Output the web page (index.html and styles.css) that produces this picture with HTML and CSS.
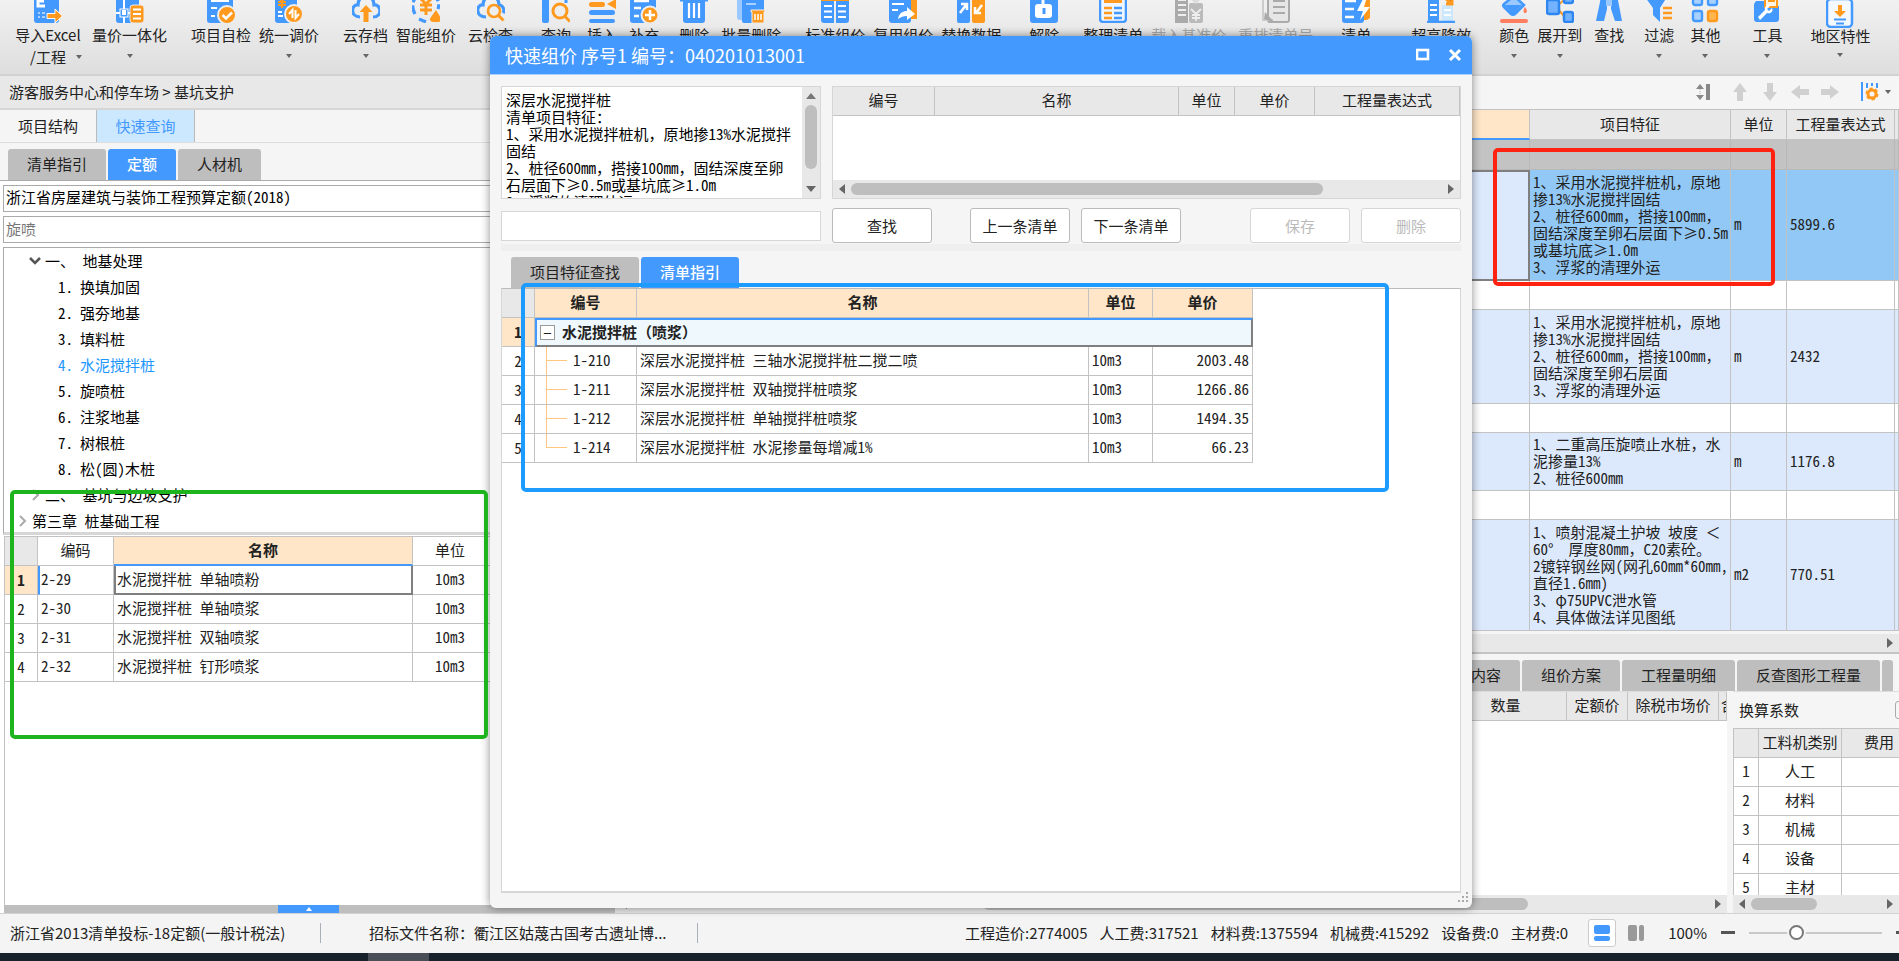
FILE: index.html
```html
<!DOCTYPE html>
<html lang="zh-CN">
<head>
<meta charset="utf-8">
<title>快速组价</title>
<link rel="stylesheet" href="styles.css">
</head>
<body>
<header class="ribbon">
  <button class="tool two-line"><svg viewBox="0 0 28 28"><rect width="25" height="28" rx="3" fill="#4499ff"/><path d="M10 1H4v10h7M4 6h6" fill="none" stroke="#fff" stroke-width="3"/><path d="M4 18h2M8 18h3M4 22h2M8 22h3" stroke="#a9d1ff" stroke-width="2"/><path d="M13 18.500h8v-4.500l7.500 7-7.500 7v-4.500h-8z" fill="#ff9a1f" stroke="#fff" stroke-width="1"/></svg><span>导入Excel<br>/工程</span><i class="caret"></i></button>
  <button class="tool s12"><svg viewBox="0 0 28 28"><rect width="23" height="28" rx="3" fill="#4499ff"/><path d="M8 0v28M0 18h23" stroke="#fff" stroke-width="2"/><rect x="4" y="14" width="8" height="8" fill="#4499ff" stroke="#fff" stroke-width="1"/><rect x="6" y="15" width="4" height="5" fill="#fff"/><rect x="14" y="10" width="14" height="18" rx="3" fill="#ff9a1f" stroke="#e9e9e9"/><path d="M17 14.500h8M17 19h8M17 23.500h8" stroke="#fff" stroke-width="2"/></svg><span>量价一体化</span><i class="caret"></i></button>
  <button class="tool s24"><svg viewBox="0 0 28 28"><rect width="26" height="28" rx="3" fill="#4499ff"/><path d="M4 6h18M4 13h6M4 21h4" stroke="#fff" stroke-width="2"/><circle cx="20" cy="20" r="9" fill="#ff9a1f" stroke="#eee" stroke-width="2"/><path d="M15.500 20l3.500 3.500 6-6" fill="none" stroke="#fff" stroke-width="2.500"/></svg><span>项目自检</span></button>
  <button class="tool s8"><svg viewBox="0 0 28 28"><rect width="22" height="28" rx="3" fill="#4499ff"/><path d="M3 2l4 4 4-4M7 6v7M3 7h8M3 10h8" fill="none" stroke="#ff9a1f" stroke-width="2.200"/><path d="M3 21h5M3 17h4" stroke="#fff" stroke-width="2"/><circle cx="19" cy="19" r="9" fill="#ff9a1f" stroke="#eee" stroke-width="2"/><path d="M17.500 23v-8l-3.500 4M20.500 15v8l3.500-4" fill="none" stroke="#fff" stroke-width="2"/></svg><span>统一调价</span><i class="caret"></i></button>
  <button class="tool s24"><svg viewBox="0 0 28 28"><path d="M8 22C-2 22-1 9 6 10 6-2 22-2 22 10c7-1 9 12-1 12" fill="none" stroke="#4499ff" stroke-width="3.200"/><path d="M14 10l6.500 7H16.500v10h-5V17H7.500z" fill="#ff9a1f"/></svg><span>云存档</span><i class="caret"></i></button>
  <button class="tool s8"><svg viewBox="0 0 28 28"><path d="M3 19C-1 12 0 3 8 0M20 0c6 3 8 8 6 14M7 24l7 3" fill="none" stroke="#4499ff" stroke-width="3.200" stroke-dasharray="9 3"/><path d="M8 3l6 6 6-6M14 9v11M8 10h12M8 15h12" fill="none" stroke="#ff9a1f" stroke-width="3"/><path d="M24 15l5 8c1 3-1 4-3 4h-5c-3 0-4-3-2-5z" fill="#ff9a1f"/></svg><span>智能组价</span></button>
  <button class="tool s12"><svg viewBox="0 0 28 28"><path d="M9 22C-2 22-1 9 6 10 6-2 22-2 22 10c4 0 6 5 4 8" fill="none" stroke="#4499ff" stroke-width="3.200"/><circle cx="17" cy="16" r="6" fill="#eee" stroke="#ff9a1f" stroke-width="2.600"/><path d="M21.500 20.500l5 5" stroke="#ff9a1f" stroke-width="3"/></svg><span>云检查</span></button>
  <button class="tool s28"><svg viewBox="0 0 28 28"><rect width="7" height="28" rx="2" fill="#4499ff"/><path d="M8 0h16v8" fill="none" stroke="#4499ff" stroke-width="3"/><circle cx="18" cy="16" r="7" fill="#eee" stroke="#ff9a1f" stroke-width="3"/><path d="M23 21.500l5 5" stroke="#ff9a1f" stroke-width="3"/></svg><span>查询</span></button>
  <button class="tool s16"><svg viewBox="0 0 28 28"><rect x="1" y="24" width="26" height="4" rx="2" fill="#4499ff"/><rect x="1" y="15" width="26" height="5" rx="2.500" fill="#4499ff"/><rect x="1" y="7" width="16" height="5" rx="2.500" fill="#ff9a1f"/><path d="M28 4v10l-9-5z" fill="#ff9a1f"/></svg><span>插入</span></button>
  <button class="tool s12"><svg viewBox="0 0 28 28"><rect width="26" height="28" rx="3" fill="#4499ff"/><path d="M4 6h15M4 13h7M4 21h5" stroke="#fff" stroke-width="2.500"/><circle cx="20" cy="20" r="8.500" fill="#ff9a1f" stroke="#eee" stroke-width="2"/><path d="M20 15v10M15 20h10" stroke="#fff" stroke-width="2.500"/></svg><span>补充</span></button>
  <button class="tool s20"><svg viewBox="0 0 28 28"><path d="M3 6h22v19a3 3 0 0 1-3 3H6a3 3 0 0 1-3-3z" fill="#4499ff"/><path d="M0 5h28M9 2h10" stroke="#4499ff" stroke-width="3"/><path d="M9 8v15M14 8v15M19 8v15" stroke="#fff" stroke-width="2.200"/></svg><span>删除</span></button>
  <button class="tool s12"><svg viewBox="0 0 28 28"><path d="M0 0h5v25H3a3 3 0 0 1-3-3z" fill="#9bc9ff"/><rect x="5" width="22" height="28" rx="2" fill="#4499ff"/><path d="M9 4h10M9 9h10" stroke="#a9d1ff" stroke-width="2"/><path d="M14 15h14v2h-1v11H15V17h-1z" fill="#ff9a1f" stroke="#eee" stroke-width="1"/><path d="M18 19v6M21 19v6M24 19v6" stroke="#fff" stroke-width="1.500"/></svg><span>批量删除</span></button>
  <button class="tool s24"><svg viewBox="0 0 28 28"><path d="M0 6h13v22H3a3 3 0 0 1-3-3zM15 6h13v19a3 3 0 0 1-3 3H15z" fill="#4499ff"/><path d="M0 4h28" stroke="#ff9a1f" stroke-width="4"/><path d="M3 11h8M3 16.500h8M3 22h8M17 11h8M17 16.500h8M17 22h8" stroke="#fff" stroke-width="2"/></svg><span>标准组价</span></button>
  <button class="tool s8"><svg viewBox="0 0 28 28"><path d="M19 2h9v22h-9z" fill="#ff9a1f"/><rect width="22" height="28" rx="3" fill="#4499ff"/><path d="M3 4h12M3 9h12M3 15h6" stroke="#fff" stroke-width="2"/><path d="M9 24c1-6 5-8 9-8v-4l8 7-8 6v-4c-4 0-6 1-9 3z" fill="#fff"/></svg><span>复用组价</span></button>
  <button class="tool s8"><svg viewBox="0 0 28 28"><rect width="13" height="28" rx="2" fill="#4499ff"/><rect x="15" width="13" height="28" rx="2" fill="#ff9a1f"/><path d="M3 18l6-8M4 9h6v6M25 10l-6 8M18 12v6h6" fill="none" stroke="#fff" stroke-width="2.500"/></svg><span>替换数据</span></button>
  <button class="tool s28"><svg viewBox="0 0 28 28"><rect width="28" height="28" rx="3" fill="#4499ff"/><path d="M5 5V3a4 4 0 0 1 8 0v7" fill="none" stroke="#fff" stroke-width="3"/><rect x="5" y="9" width="17" height="14" rx="3" fill="#fff"/><path d="M14 13v6" stroke="#4499ff" stroke-width="3"/></svg><span>解除</span></button>
  <button class="tool s24"><svg viewBox="0 0 28 28"><rect x="1" y="-4" width="26" height="31" rx="3" fill="#eef6ff" stroke="#4499ff" stroke-width="2.500"/><path d="M5 6h18" stroke="#ff9a1f" stroke-width="4"/><path d="M5 13h8M5 18h8M5 23h8" stroke="#ff9a1f" stroke-width="2.500"/><path d="M15 13h8M15 18h8M15 23h8" stroke="#4499ff" stroke-width="2.500"/></svg><span>整理清单</span></button>
  <button class="tool s8" disabled><svg viewBox="0 0 28 28"><rect width="13" height="28" fill="#aaa"/><rect x="14" y="8" width="14" height="20" rx="2" fill="#bbb"/><path d="M3 5h8M3 10h8M3 15h8M3 20h8M16 14l5 5 5-5M21 19v7M17 20h8M17 23h8" fill="none" stroke="#eee" stroke-width="1.800"/><path d="M12 0h13v5l-4 4-5-4z" fill="#ddd"/></svg><span>载入基准价</span></button>
  <button class="tool s12" disabled><svg viewBox="0 0 28 28"><rect x="6" y="-3" width="21" height="30" rx="2" fill="#e6e6e6" stroke="#aaa" stroke-width="2"/><path d="M11 6h12M11 12h12M11 18h12" stroke="#aaa" stroke-width="2"/><path d="M1 0v25h10" fill="none" stroke="#ccc" stroke-width="2"/><path d="M3 17l9 10-10-3z" fill="#aaa"/></svg><span>重排清单号</span></button>
  <button class="tool s28"><svg viewBox="0 0 28 28"><path d="M20 0h8v23l-3 2h-5z" fill="#ff9a1f"/><rect width="22" height="28" rx="3" fill="#4499ff"/><path d="M3 6h11M3 14h9M3 22h9" stroke="#fff" stroke-width="2.500"/><path d="M22 2l-7 14h6l-3 9 10-13h-6l3-10z" fill="#fff"/></svg><span>清单</span></button>
  <button class="tool s40"><svg viewBox="0 0 28 28"><path d="M1 3h11v25H1z" fill="#4499ff"/><path d="M15 10h11v17H15z" fill="#cce8ff"/><path d="M0 27h28" stroke="#4499ff" stroke-width="2.500"/><path d="M3 10h7M3 15h7M3 20h7M17 15h7M17 20h7" stroke="#fff" stroke-width="2"/><path d="M18 3l7 6M25 3v6h-6" stroke="#ff9a1f" stroke-width="3"/></svg><span>超高降效</span></button>
  <button class="tool s28"><svg viewBox="0 0 28 28"><path d="M14 1l10 9-9 9c-1 1-3 1-4 0l-7-7c-1-1-1-2 0-3z" fill="#9bc9ff" stroke="#4499ff" stroke-width="2.500"/><path d="M4 10h18l-9 10z" fill="#4499ff"/><path d="M25 12c3 4 2 6 0 6s-2-3 0-6z" fill="#ff7e5f"/><rect y="24" width="28" height="4" rx="2" fill="#ff7e5f"/></svg><span>颜色</span><i class="caret"></i></button>
  <button class="tool s8"><svg viewBox="0 0 28 28"><path d="M11 11l7-6M11 13l7 8" stroke="#ff9a1f" stroke-width="2"/><g fill="#72b2ff" stroke="#2e86f0" stroke-width="2.500"><rect x="1" y="5" width="12" height="14" rx="2"/><rect x="18" y="-3" width="9" height="11" rx="2"/><rect x="18" y="17" width="9" height="10" rx="2"/></g></svg><span>展开到</span><i class="caret"></i></button>
  <button class="tool s12"><svg viewBox="0 0 28 28"><path d="M6 0h6v14l-3 12H1L5 7zM16 0h6l5 26h-7l-4-12z" fill="#4499ff"/><path d="M11 4h6v7h-6z" fill="#9bc9ff"/></svg><span>查找</span></button>
  <button class="tool s20"><svg viewBox="0 0 28 28"><path d="M0 2h22l-7 11v14l-7-7v-7z" fill="#4499ff"/><path d="M18 13h9M18 18h9M18 23h9" stroke="#ff9a1f" stroke-width="2.500"/></svg><span>过滤</span><i class="caret"></i></button>
  <button class="tool s16"><svg viewBox="0 0 28 28"><g fill="#a9d1ff" stroke="#4499ff" stroke-width="2.400"><rect x="2" y="0" width="9" height="10" rx="2"/><rect x="17" y="0" width="9" height="10" rx="2"/><rect x="2" y="16" width="9" height="10" rx="2"/></g><rect x="17" y="16" width="9" height="10" rx="2" fill="#ffb74d" stroke="#ff9a1f" stroke-width="2.400"/></svg><span>其他</span><i class="caret"></i></button>
  <button class="tool s32"><svg viewBox="0 0 28 28"><path d="M3 6h8v5h15v13a3 3 0 0 1-3 3H4a3 3 0 0 1-3-3V9z" fill="#4499ff"/><path d="M12 1h12v11H12z" fill="#fff4e2" stroke="#ff9a1f" stroke-width="2"/><path d="M15 6h7" stroke="#ff9a1f" stroke-width="2"/><path d="M5 22l7-7c-1-4 3-6 5-4l-3 3 2 2 3-3c2 4-2 6-5 5l-7 7z" fill="#fff"/></svg><span>工具</span><i class="caret"></i></button>
  <button class="tool region s28"><svg viewBox="0 0 28 28"><rect x="1" y="-1" width="25" height="28" rx="4" fill="#f4f9ff" stroke="#4499ff" stroke-width="2.500"/><path d="M14 17l-6-6h4V5h4v6h4z" fill="#ff9a1f"/><path d="M8 19.500h12M10 23.500h8" stroke="#4499ff" stroke-width="2.200"/></svg><span>地区特性</span><i class="caret"></i></button>
</header>

<main class="work">
  <aside class="side">
    <nav class="crumb">游客服务中心和停车场 &gt; 基坑支护</nav>
    <div class="main-tabs"><button>项目结构</button><button class="on">快速查询</button></div>
    <div class="tabs side-tabs"><button class="tab">清单指引</button><button class="tab on">定额</button><button class="tab">人材机</button></div>
    <select class="field" aria-label="定额库"><option>浙江省房屋建筑与装饰工程预算定额(2018)</option></select>
    <input class="field" type="text" placeholder="旋喷" aria-label="搜索定额">
    <ul class="tree">
      <li class="lv1"><svg class="chev" viewBox="0 0 12 12"><path d="M1 3l5 5 5-5" fill="none" stroke="#555" stroke-width="2.500"/></svg>一、 地基处理</li>
      <li class="lv2"><span>1.</span>换填加固</li>
      <li class="lv2"><span>2.</span>强夯地基</li>
      <li class="lv2"><span>3.</span>填料桩</li>
      <li class="lv2 on"><span>4.</span>水泥搅拌桩</li>
      <li class="lv2"><span>5.</span>旋喷桩</li>
      <li class="lv2"><span>6.</span>注浆地基</li>
      <li class="lv2"><span>7.</span>树根桩</li>
      <li class="lv2"><span>8.</span>松(圆)木桩</li>
      <li class="lv1"><svg class="chev" viewBox="0 0 12 12"><path d="M4 1l5 5-5 5" fill="none" stroke="#aaa" stroke-width="2"/></svg>二、 基坑与边坡支护</li>
      <li class="lv0"><svg class="chev" viewBox="0 0 12 12"><path d="M4 1l5 5-5 5" fill="none" stroke="#aaa" stroke-width="2"/></svg>第三章 桩基础工程</li>
    </ul>
    <div class="quota">
      <table class="grid">
        <colgroup><col class="w33"><col class="w76"><col class="w299"><col class="w75"><col></colgroup>
        <tr><th class="grey"></th><th class="plain">编码</th><th class="peach cur">名称</th><th class="plain">单位</th><th class="plain"></th></tr>
        <tr><td class="no peach"><b>1</b></td><td class="code cur-l">2-29</td><td class="active">水泥搅拌桩 单轴喷粉</td><td class="mid">10m3</td><td></td></tr>
        <tr><td class="no">2</td><td>2-30</td><td>水泥搅拌桩 单轴喷浆</td><td class="mid">10m3</td><td></td></tr>
        <tr><td class="no">3</td><td>2-31</td><td>水泥搅拌桩 双轴喷浆</td><td class="mid">10m3</td><td></td></tr>
        <tr><td class="no">4</td><td>2-32</td><td>水泥搅拌桩 钉形喷浆</td><td class="mid">10m3</td><td></td></tr>
      </table>
    </div>
    <div class="dock"><button aria-label="展开"><i></i></button></div>
  </aside>

  <section class="bill">
    <div class="bill-tools">
      <svg class="i16" viewBox="0 0 16 16"><path d="M4 0l4 5H0zM4 16l4-5H0z" fill="#888"/><path d="M4 5v6" stroke="#aaa" stroke-width="1" stroke-dasharray="1 1"/><path d="M12 0v16" stroke="#888" stroke-width="4"/></svg>
      <svg class="i20" viewBox="0 0 20 20"><path d="M10 1l7 9h-4v9H7v-9H3z" fill="#d0d0d0"/></svg>
      <svg class="i20" viewBox="0 0 20 20"><path d="M10 19l7-9h-4V1H7v9H3z" fill="#d0d0d0"/></svg>
      <svg class="i20" viewBox="0 0 20 20"><path d="M1 10l9-7v4h9v6h-9v4z" fill="#d0d0d0"/></svg>
      <svg class="i20" viewBox="0 0 20 20"><path d="M19 10l-9-7v4H1v6h9v4z" fill="#d0d0d0"/></svg>
      <svg class="i20 cfg" viewBox="0 0 20 20"><path d="M3 0v19" stroke="#4499ff" stroke-width="2"/><path d="M8 1v5M13 1v3M18 1v5" stroke="#4499ff" stroke-width="2"/><circle cx="13" cy="12" r="4" fill="none" stroke="#ff9a1f" stroke-width="3"/><circle cx="13" cy="12" r="5.500" fill="none" stroke="#ff9a1f" stroke-width="2" stroke-dasharray="3 2.700"/></svg>
      <i class="caret"></i>
    </div>
    <table class="grid list">
      <colgroup><col><col class="w201"><col class="w56"><col class="w108"><col class="w4"></colgroup>
      <tr class="h30"><th class="peach cur"></th><th>项目特征</th><th>单位</th><th>工程量表达式</th><th></th></tr>
      <tr class="h30 total"><td></td><td></td><td></td><td></td><td></td></tr>
      <tr class="h111 sel"><td class="active"></td><td>1、采用水泥搅拌桩机，原地<br>掺13%水泥搅拌固结<br>2、桩径600mm，搭接100mm，<br>固结深度至卵石层面下≥0.5m<br>或基坑底≥1.0m<br>3、浮浆的清理外运</td><td>m</td><td>5899.6</td><td></td></tr>
      <tr><td></td><td></td><td></td><td></td><td></td></tr>
      <tr class="h94 item"><td></td><td>1、采用水泥搅拌桩机，原地<br>掺13%水泥搅拌固结<br>2、桩径600mm，搭接100mm，<br>固结深度至卵石层面<br>3、浮浆的清理外运</td><td>m</td><td>2432</td><td></td></tr>
      <tr><td></td><td></td><td></td><td></td><td></td></tr>
      <tr class="h58 item"><td></td><td>1、二重高压旋喷止水桩，水<br>泥掺量13%<br>2、桩径600mm</td><td>m</td><td>1176.8</td><td></td></tr>
      <tr><td></td><td></td><td></td><td></td><td></td></tr>
      <tr class="h111 item"><td></td><td>1、喷射混凝土护坡 坡度 ＜<br>60°　厚度80mm，C20素砼。<br>2镀锌钢丝网(网孔60mm*60mm,<br>直径1.6mm)<br>3、φ75UPVC泄水管<br>4、具体做法详见图纸</td><td>m2</td><td>770.51</td><td></td></tr>
    </table>
    <div class="hbar gapped"><i class="arr l"></i><i class="thumb"></i><i class="arr r"></i></div>
    <div class="tabs bill-tabs"><button class="tab">特征及内容</button><button class="tab">组价方案</button><button class="tab">工程量明细</button><button class="tab">反查图形工程量</button><button class="tab stub" aria-label="更多"></button></div>
    <div class="lower">
      <div class="detail">
        <table class="grid">
          <colgroup><col><col class="w122"><col class="w61"><col class="w91"><col class="w8"></colgroup>
          <tr><th></th><th>数量</th><th>定额价</th><th>除税市场价</th><th class="cut">含</th></tr>
        </table>
        <div class="space"></div>
        <div class="hbar"><i class="arr l"></i><i class="thumb short"></i><i class="arr r"></i></div>
      </div>
      <div class="coef">
        <h2>换算系数<button aria-label="关闭">×</button></h2>
        <div class="coef-view">
        <table class="grid">
          <colgroup><col class="w25"><col class="w83"><col class="w75"></colgroup>
          <tr><th></th><th>工料机类别</th><th>费用</th></tr>
          <tr><td>1</td><td>人工</td><td></td></tr>
          <tr><td>2</td><td>材料</td><td></td></tr>
          <tr><td>3</td><td>机械</td><td></td></tr>
          <tr><td>4</td><td>设备</td><td></td></tr>
          <tr><td>5</td><td>主材</td><td></td></tr>
        </table>
        </div>
        <div class="hbar"><i class="arr l"></i><i class="thumb mini"></i><i class="arr r"></i></div>
      </div>
    </div>
  </section>
</main>

<footer class="status">
  <span class="rule-set">浙江省2013清单投标-18定额(一般计税法)</span>
  <span class="file">招标文件名称：衢江区姑蔑古国考古遗址博...</span>
  <div class="sums"><span>工程造价:2774005</span><span>人工费:317521</span><span>材料费:1375594</span><span>机械费:415292</span><span>设备费:0</span><span>主材费:0</span></div>
  <button class="view on" aria-label="上下布局"><svg viewBox="0 0 16 16"><rect width="16" height="9" rx="2" fill="#4499ff"/><rect y="11" width="16" height="5" rx="2" fill="#4499ff"/></svg></button>
  <button class="view" aria-label="左右布局"><svg viewBox="0 0 16 16"><rect width="9" height="16" rx="2" fill="#999"/><rect x="11" width="5" height="16" rx="2" fill="#999"/></svg></button>
  <span class="zoom">100%</span>
  <button class="minus" aria-label="缩小"></button>
  <input type="range" min="0" max="100" value="34" aria-label="缩放">
  <button class="plus" aria-label="放大"></button>
</footer>
<div class="taskbar"><i></i></div>

<section class="dialog" role="dialog" aria-labelledby="dlg-title">
  <header class="dlg-head">
    <h1 id="dlg-title">快速组价 序号1 编号：040201013001</h1>
    <button aria-label="最大化"><svg viewBox="0 0 14 14"><rect x="1" y="2" width="11" height="9" fill="none" stroke="#fff" stroke-width="2.600"/></svg></button>
    <button aria-label="关闭"><svg viewBox="0 0 14 14"><path d="M2 2l10 10M12 2L2 12" stroke="#fff" stroke-width="3"/></svg></button>
  </header>
  <div class="dlg-body">
    <div class="top">
      <div class="memo">
        <textarea aria-label="项目特征" readonly>深层水泥搅拌桩
清单项目特征：
1、采用水泥搅拌桩机，原地掺13%水泥搅拌
固结
2、桩径600mm，搭接100mm，固结深度至卵
石层面下≥0.5m或基坑底≥1.0m
3、浮浆的清理外运</textarea>
        <div class="vbar"><i class="arr u"></i><i class="thumb"></i><i class="arr d"></i></div>
      </div>
      <div class="picked">
        <table class="grid">
          <colgroup><col class="w102"><col><col class="w56"><col class="w80"><col class="w145"></colgroup>
          <tr><th>编号</th><th>名称</th><th>单位</th><th>单价</th><th>工程量表达式</th></tr>
        </table>
        <div class="space"></div>
        <div class="hbar"><i class="arr l"></i><i class="thumb wide"></i><i class="arr r"></i></div>
      </div>
    </div>
    <div class="actions">
      <input type="text" aria-label="关键字">
      <button class="btn">查找</button>
      <button class="btn far">上一条清单</button>
      <button class="btn">下一条清单</button>
      <span class="grow"></span>
      <button class="btn" disabled>保存</button>
      <button class="btn" disabled>删除</button>
    </div>
    <div class="band"></div>
    <div class="tabs dlg-tabs"><button class="tab">项目特征查找</button><button class="tab on">清单指引</button></div>
    <div class="guide">
      <table class="grid">
        <colgroup><col class="w33"><col class="w102"><col class="w452"><col class="w64"><col class="w100"></colgroup>
        <tr><th class="grey"></th><th class="peach">编号</th><th class="peach">名称</th><th class="peach">单位</th><th class="peach">单价</th></tr>
        <tr><td class="no peach"><b>1</b></td><td class="group" colspan="4"><span class="box">−</span><b>水泥搅拌桩（喷浆）</b></td></tr>
        <tr><td class="no">2</td><td class="leaf">1-210</td><td>深层水泥搅拌桩 三轴水泥搅拌桩二搅二喷</td><td>10m3</td><td class="num">2003.48</td></tr>
        <tr><td class="no">3</td><td class="leaf">1-211</td><td>深层水泥搅拌桩 双轴搅拌桩喷浆</td><td>10m3</td><td class="num">1266.86</td></tr>
        <tr><td class="no">4</td><td class="leaf">1-212</td><td>深层水泥搅拌桩 单轴搅拌桩喷浆</td><td>10m3</td><td class="num">1494.35</td></tr>
        <tr><td class="no">5</td><td class="leaf last">1-214</td><td>深层水泥搅拌桩 水泥掺量每增减1%</td><td>10m3</td><td class="num">66.23</td></tr>
      </table>
    </div>
  </div>
  <svg class="grip" viewBox="0 0 12 12"><path d="M9 0h2v2H9zM9 4h2v2H9zM5 4h2v2H5zM9 8h2v2H9zM5 8h2v2H5zM1 8h2v2H1z" fill="#aaa"/></svg>
</section>

<div class="mark green"></div>
<div class="mark blue"></div>
<div class="mark red"></div>
</body>
</html>
```
FILE: styles.css
```css
* { box-sizing: border-box; }

:root {
  --ui: "Noto Sans CJK SC", sans-serif;
  --mono: "Noto Sans Mono CJK SC", "Noto Sans CJK SC", monospace;
  --blue: #4499ff;
  --line: #c3c3c3;
  --peach: #ffe6c8;
}

body {
  margin: 0;
  height: 100vh;
  display: flex;
  flex-direction: column;
  position: relative;
  overflow: hidden;
  font: 15px/20px var(--ui);
  color: #222;
  background: #f5f5f5;
}

button, input, select, textarea { font: inherit; color: inherit; margin: 0; }
button { border: 0; padding: 0; background: none; white-space: nowrap; }
i { display: block; }

.caret {
  width: 0;
  border: 3px solid transparent;
  border-top: 4px solid #666;
  border-bottom: 0;
}

/* ribbon */
.ribbon {
  flex: none;
  height: 76px;
  display: flex;
  align-items: flex-start;
  padding-left: 16px;
  overflow: hidden;
  background: linear-gradient(#f1f1f1, #dedede);
  border-bottom: 2px solid #d2d2d2;
}
.tool {
  flex: none;
  margin-top: -5px;
  display: flex;
  flex-direction: column;
  align-items: center;
  line-height: 22px;
}
.tool svg { width: 28px; height: 28px; margin-bottom: 1px; }
.tool .caret { margin-top: 8px; }
.tool:disabled { color: #aaa; }
.two-line { width: 64px; position: relative; }
.two-line .caret { position: absolute; right: -2px; bottom: 9px; }
.tool.region { margin-top: 0; }
.region svg { margin-bottom: -3px; }
.region .caret { margin-top: 6px; }
.s8 { margin-left: 8px; }
.s12 { margin-left: 12px; }
.s16 { margin-left: 16px; }
.s20 { margin-left: 20px; }
.s24 { margin-left: 24px; }
.s28 { margin-left: 28px; }
.s32 { margin-left: 32px; }
.s40 { margin-left: 40px; }

.work { flex: 1; min-height: 0; display: flex; }

/* shared tabs */
.tabs { display: flex; gap: 2px; align-items: flex-end; }
.tab {
  height: 31px;
  padding: 0 19px 2px;
  background: #bebebe;
  border-radius: 3px 3px 0 0;
  flex: none;
}
.tab.on { background: var(--blue); color: #fff; font-weight: 500; }

/* shared grid */
.grid {
  width: 100%;
  table-layout: fixed;
  border-collapse: separate;
  border-spacing: 0;
  font-family: var(--mono);
  line-height: 17px;
}
.grid th, .grid td {
  height: 29px;
  padding: 0 3px 3px;
  border-right: 1px solid var(--line);
  border-bottom: 1px solid var(--line);
  white-space: nowrap;
  overflow: hidden;
  text-align: left;
}
.grid th { background: #e8e8e8; font-weight: 400; text-align: center; }
.grid th.plain { background: #fff; }
.grid th.grey { background: #e8e8e8; }
.grid .peach { background: var(--peach); }
.grid th.peach { font-weight: 700; }
.grid th.cur { border-bottom: 2px solid var(--blue); }
.grid td.no { text-align: center; padding-bottom: 1px; }
.grid td.cur-l { border-left: 2px solid var(--blue); padding-left: 1px; }
.grid td.mid { text-align: center; }
.grid td.num { text-align: right; }
.grid td.active { border: 2px solid #7f7f7f; border-top: 0; padding-left: 1px; }
.w4 { width: 4px; }
.w8 { width: 8px; }
.w25 { width: 25px; }
.w33 { width: 33px; }
.w56 { width: 56px; }
.w61 { width: 61px; }
.w64 { width: 64px; }
.w75 { width: 75px; }
.w76 { width: 76px; }
.w80 { width: 80px; }
.w83 { width: 83px; }
.w91 { width: 91px; }
.w100 { width: 100px; }
.w102 { width: 102px; }
.w108 { width: 108px; }
.w122 { width: 122px; }
.w145 { width: 145px; }
.w201 { width: 201px; }
.w299 { width: 299px; }
.w452 { width: 452px; }

/* scroll bars */
.hbar {
  flex: none;
  height: 18px;
  display: flex;
  align-items: center;
  gap: 6px;
  padding: 0 6px;
  background: #e8e8e8;
}
.hbar .thumb { height: 12px; border-radius: 6px; background: #bebebe; width: 400px; }
.hbar .thumb.wide { width: 472px; }
.hbar .thumb.mini { width: 66px; }
.hbar .thumb.short { width: 545px; margin-left: 350px; }
.arr { width: 0; border: 5px solid transparent; flex: none; }
.arr.l { border-right: 6px solid #666; border-left: 0; }
.arr.r { border-left: 6px solid #666; border-right: 0; margin-left: auto; }
.arr.u { border-bottom: 6px solid #777; border-top: 0; }
.arr.d { border-top: 6px solid #666; border-bottom: 0; margin-top: auto; }
.vbar {
  width: 18px;
  display: flex;
  flex-direction: column;
  align-items: center;
  padding: 6px 0;
  gap: 6px;
  background: #e8e8e8;
}
.vbar .thumb { width: 12px; height: 64px; border-radius: 6px; background: #bebebe; }
.space { flex: 1; background: #fff; }

/* left side */
.side { width: 615px; flex: none; display: flex; flex-direction: column; background: #fff; }
.crumb {
  height: 34px;
  padding: 0 9px;
  line-height: 31px;
  background: #e8e8e8;
  border-bottom: 2px solid #d6d6d6;
  flex: none;
}
.main-tabs { display: flex; height: 33px; background: #f5f5f5; border-bottom: 1px solid #ddd; flex: none; }
.main-tabs button { width: 96px; }
.main-tabs .on {
  width: 99px;
  background: #cce8ff;
  color: var(--blue);
  border: solid #bbb;
  border-width: 0 1px;
}
.side-tabs { height: 38px; padding-left: 8px; background: #f5f5f5; border-bottom: 1px solid #aaa; flex: none; }
.field {
  appearance: none;
  height: 27px;
  flex: none;
  margin: 4px 0 0 3px;
  padding: 0 2px 3px;
  border: 1px solid #aaa;
  border-radius: 0;
  background: #fff;
  font-family: var(--mono);
  color: #000;
}
.field::placeholder { color: #777; }
.tree {
  list-style: none;
  margin: 4px 0 0 3px;
  padding: 0;
  flex: none;
  height: 288px;
  border: 1px solid #aaa;
  border-bottom: 3px solid #d6d6d6;
  font-family: var(--mono);
  line-height: 26px;
  color: #000;
}
.tree li { display: flex; align-items: center; white-space: pre; }
.tree .chev { width: 12px; height: 12px; margin-right: 4px; }
.tree .lv0 { padding-left: 12px; }
.tree .lv1 { padding-left: 25px; }
.tree .lv2 { padding-left: 54px; }
.tree .lv2 span { width: 22px; }
.tree .on { color: #1e96ff; }
.quota { flex: 1; margin: 1px 0 0 4px; border-left: 1px solid var(--line); border-top: 1px solid var(--line); }
.dock { flex: none; height: 8px; margin-left: 4px; background: #bebebe; padding-left: 274px; }
.dock button { display: block; width: 61px; height: 8px; background: var(--blue); }
.dock i { width: 0; margin: 0 auto; border: 3px solid transparent; border-bottom: 4px solid #fff; border-top: 0; }

/* bill of quantities */
.bill { flex: 1; min-width: 0; display: flex; flex-direction: column; }
.bill-tools {
  height: 34px;
  flex: none;
  display: flex;
  align-items: center;
  justify-content: flex-end;
  gap: 10px;
  padding: 0 8px 2px 0;
  border-bottom: 1px solid var(--line);
}
.i16 { width: 16px; height: 16px; margin-right: 8px; }
.i20 { width: 20px; height: 20px; }
.cfg { margin: 0 -4px 0 9px; }
.list { background: #fff; flex: none; }
.grid .h30 > * { height: 30px; }
.grid .h58 > * { height: 58px; }
.grid .h94 > * { height: 94px; }
.grid .h111 > * { height: 111px; }
.grid .total td { background: #c3c3c3; border-color: #b8b8b8; }
.grid .sel td { background: #91c8f6; }
.grid .sel .active { background: #dce9fd; border-top: 2px solid #7f7f7f; }
.grid .item td { background: #dce9fd; }
.gapped { margin-top: 3px; height: 20px; border-bottom: 2px solid #c3c3c3; }
.bill-tabs { flex: none; height: 37px; justify-content: flex-end; padding-right: 6px; }
.stub { width: 11px; padding: 0; }
.lower { flex: 1; min-height: 0; display: flex; gap: 6px; }
.detail { flex: 1; min-width: 0; display: flex; flex-direction: column; border-top: 1px solid #ddd; }
.grid th.cut { padding: 0 0 3px 2px; }
.coef { width: 166px; flex: none; display: flex; flex-direction: column; border-top: 1px solid #ddd; overflow: hidden; }
.coef h2 {
  flex: none;
  margin: 0;
  height: 36px;
  padding-left: 6px;
  font: 400 15px/34px var(--mono);
  display: flex;
  justify-content: space-between;
  align-items: center;
}
.coef h2 button { width: 18px; height: 18px; margin-right: -14px; border: 1px solid #aaa; border-radius: 3px; line-height: 14px; }
.coef-view { flex: 1; min-height: 0; overflow: hidden; background: #fff; border: solid var(--line); border-width: 1px 0 0 1px; }
.coef .grid { width: 183px; }
.coef .grid td { text-align: center; }

/* status bar */
.status {
  flex: none;
  height: 40px;
  display: flex;
  align-items: center;
  padding-bottom: 2px;
  overflow: hidden;
  white-space: nowrap;
  background: #f4f4f4;
  border-top: 1px solid #d2d2d2;
}
.rule-set { flex: none; width: 276px; margin-left: 10px; overflow: hidden; }
.file {
  flex: none;
  margin-left: 34px;
  padding: 0 30px 0 48px;
  border: solid #a9b0b8;
  border-width: 0 1px;
}
.sums { display: flex; gap: 12px; margin-left: auto; margin-right: 20px; }
.view { width: 28px; height: 28px; flex: none; display: grid; place-items: center; margin-right: 6px; }
.view svg { width: 16px; height: 16px; }
.view.on { background: #fff; border: 1px solid #ccc; border-radius: 3px; }
.zoom { margin: 0 14px 0 12px; flex: none; }
.minus, .plus { flex: none; width: 14px; height: 3px; background: #555; }
.plus { width: 3px; }
.status input {
  appearance: none;
  flex: none;
  width: 133px;
  height: 16px;
  margin: 0 14px;
  background: linear-gradient(#c8c8c8, #c8c8c8) center / 100% 2px no-repeat;
}
.status input::-webkit-slider-thumb {
  appearance: none;
  width: 15px;
  height: 15px;
  border: 2px solid #777;
  border-radius: 50%;
  background: #fff;
  box-shadow: 0 0 0 2px #f4f4f4;
}
.taskbar { flex: none; height: 8px; background: #18222d; padding-left: 368px; }
.taskbar i { width: 61px; height: 8px; background: #4a4e57; }

/* floating window */
.dialog {
  position: absolute;
  left: 490px;
  right: 427px;
  top: 36px;
  bottom: 53px;
  display: flex;
  flex-direction: column;
  border-radius: 6px;
  background: #f5f5f5;
  box-shadow: 0 0 10px rgba(0, 0, 0, .45);
}
.dlg-head {
  flex: none;
  height: 39px;
  display: flex;
  align-items: center;
  gap: 18px;
  padding: 0 10px 0 15px;
  background: var(--blue);
  border-bottom: 1px solid #a9d1ff;
  border-radius: 6px 6px 0 0;
  color: #fff;
}
.dlg-head h1 { flex: 1; margin: 0; font: 400 18px/38px var(--ui); }
.dlg-head button, .dlg-head svg { width: 14px; height: 14px; display: block; }
.dlg-body { flex: 1; min-height: 0; display: flex; flex-direction: column; padding: 11px 11px 15px; }
.top { display: flex; gap: 11px; height: 113px; flex: none; }
.memo { width: 320px; display: flex; border: 1px solid #d6d6d6; background: #fff; }
.memo textarea {
  flex: 1;
  min-width: 0;
  border: 0;
  outline: 0;
  resize: none;
  overflow: hidden;
  white-space: pre;
  padding: 4px 0 0 4px;
  font-family: var(--mono);
  line-height: 17px;
  color: #000;
}
.picked { flex: 1; min-width: 0; display: flex; flex-direction: column; border: 1px solid #d6d6d6; }
.actions { display: flex; align-items: center; gap: 11px; margin: 9px 0 1px; flex: none; }
.actions input { width: 320px; height: 30px; border: 1px solid #d6d6d6; background: #fff; }
.btn { width: 100px; height: 35px; border: 1px solid #bbb; border-radius: 3px; background: #fff; }
.btn.far { margin-left: 27px; }
.btn:disabled { color: #bbb; border-color: #d6d6d6; }
.grow { flex: 1; }
.band { height: 7px; background: #efefef; flex: none; }
.dlg-tabs { height: 37px; padding-left: 10px; flex: none; }
.guide { flex: 1; background: #fff; border: 1px solid #d6d6d6; border-top-color: #bbb; border-bottom-width: 2px; }
.guide .grid { width: 751px; }
.guide .grid .group {
  background: #eff8fc;
  border-top: 2px solid var(--blue);
  border-left: 2px solid var(--blue);
  border-right: 2px solid #7f7f7f;
  border-bottom: 2px solid #7f7f7f;
}
.group .box {
  display: inline-block;
  width: 15px;
  height: 15px;
  margin-right: 7px;
  border: 1px solid #999;
  background: #fff;
  line-height: 13px;
  text-align: center;
  vertical-align: middle;
}
.group b { vertical-align: middle; }
.guide .grid .leaf { position: relative; padding-left: 38px; }
.leaf::before, .leaf::after { content: ""; position: absolute; left: 11px; top: 0; }
.leaf::before { height: 29px; border-left: 1px solid #ffc680; }
.leaf::after { top: 13px; width: 21px; border-top: 1px solid #ffc680; }
.leaf.last::before { height: 13px; }
.grip { position: absolute; right: 3px; bottom: 4px; width: 12px; height: 12px; }

/* highlight frames */
.mark { position: absolute; border: 4px solid; border-radius: 5px; pointer-events: none; }
.mark.green { left: 10px; top: 490px; width: 478px; height: 249px; border-color: #1db41d; }
.mark.blue { left: 521px; top: 283px; width: 868px; height: 209px; border-color: #1e9bff; }
.mark.red { left: 1493px; top: 148px; width: 282px; height: 138px; border-color: #ff2211; }
```
